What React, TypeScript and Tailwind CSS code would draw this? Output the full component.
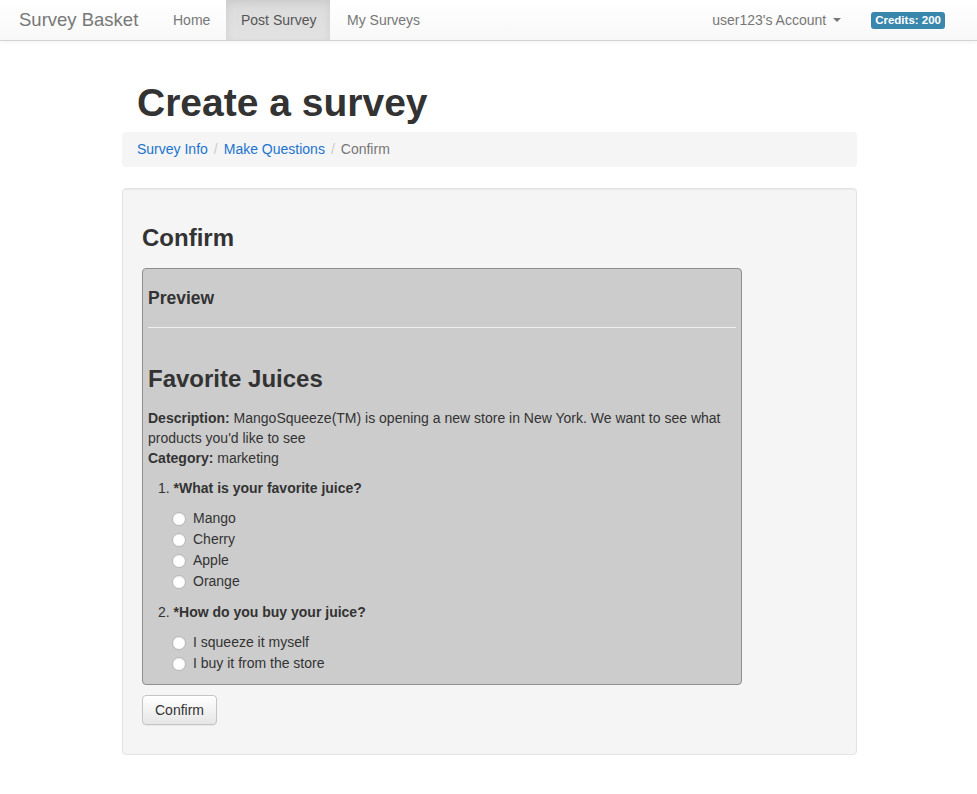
const font = { fontFamily: '"Liberation Sans", Arial, sans-serif' };

function Radio({ label }: { label: string }) {
  return (
    <div className="flex h-[21px] items-center">
      <span className="ml-[24px] h-[14px] w-[14px] rounded-full border border-[#b5b5b5] bg-white shadow-[inset_0_1px_1px_rgba(0,0,0,0.08)]" />
      <span className="ml-[7px] text-[14px] text-[#333]">{label}</span>
    </div>
  );
}

function Question({ n, text, options }: { n: number; text: string; options: string[] }) {
  return (
    <div className="mt-[10px]">
      <div className="pl-[10px] text-[14px] leading-[20px] text-[#333]">
        {n}. <b>{text}</b>
      </div>
      <div className="mt-[10px]">
        {options.map((o) => (
          <Radio key={o} label={o} />
        ))}
      </div>
    </div>
  );
}

export default function App() {
  return (
    <div className="min-h-screen bg-white text-[#333]" style={font}>
      <nav className="flex h-[41px] items-stretch whitespace-nowrap border-b border-[#d4d4d4] bg-gradient-to-b from-white to-[#f8f8f8] shadow-[0_1px_4px_rgba(0,0,0,0.06)]">
        <a className="ml-[4px] flex w-[154px] items-center px-[15px] text-[18.5px] text-[#777]">Survey Basket</a>
        <a className="flex w-[68px] items-center px-[15px] text-[14px] text-[#777]">Home</a>
        <a className="flex w-[104px] items-center bg-gradient-to-b from-[#dbdbdb] to-[#e2e2e2] pl-[15px] text-[14px] text-[#555] shadow-[inset_0_3px_9px_rgba(0,0,0,0.075)]">
          Post Survey
        </a>
        <a className="flex items-center px-[17px] text-[14px] text-[#777]">My Surveys</a>
        <div className="flex-1" />
        <a className="flex items-center px-[15px] text-[14px] text-[#777]">
          user123's Account
          <span className="ml-[7px] h-0 w-0 border-x-[4px] border-t-[4px] border-x-transparent border-t-[#777]" />
        </a>
        <div className="ml-[15px] mr-[32px] flex items-center">
          <span className="rounded-[3px] bg-[#3a87ad] px-[4px] py-[1px] text-[11.5px] font-bold leading-[15px] text-white">
            Credits: 200
          </span>
        </div>
      </nav>

      <div className="pl-[2px]">
        <div className="mx-auto w-[735px]">
          <h1 className="mt-[40px] pl-[15px] text-[39px] font-bold leading-[43px] text-[#333]">Create a survey</h1>

          <div className="mt-[8px] flex h-[35px] items-center rounded-[4px] bg-[#f5f5f5] px-[15px] text-[14px]">
            <a className="text-[#1a74cf]">Survey Info</a>
            <span className="px-[6px] text-[#ccc]">/</span>
            <a className="text-[#1a74cf]">Make Questions</a>
            <span className="px-[6px] text-[#ccc]">/</span>
            <span className="text-[#777]">Confirm</span>
          </div>

          <div className="mt-[21px] rounded-[4px] border border-[#e3e3e3] bg-[#f5f5f5] px-[19px] pb-[29px] pt-[19px] shadow-[inset_0_1px_1px_rgba(0,0,0,0.05)]">
            <h2 className="mt-[17px] text-[24px] font-bold leading-[26px]">Confirm</h2>

            <div className="mt-[17px] w-[600px] rounded-[4px] border border-[#8f8f8f] bg-[#cccccc] px-[5px] pb-[10px]">
              <h4 className="mt-[19px] text-[17.5px] font-bold leading-[20px]">Preview</h4>
              <hr className="mt-[19px] border-0 border-t border-[#eeeeee]" />
              <h3 className="mt-[38px] text-[24px] font-bold leading-[26px]">Favorite Juices</h3>
              <div className="mt-[16px] text-[14px] leading-[20px]">
                <b>Description:</b> MangoSqueeze(TM) is opening a new store in New York. We want to see what products you'd like to see
                <br />
                <b>Category:</b> marketing
              </div>
              <Question n={1} text="*What is your favorite juice?" options={['Mango', 'Cherry', 'Apple', 'Orange']} />
              <Question n={2} text="*How do you buy your juice?" options={['I squeeze it myself', 'I buy it from the store']} />
            </div>

            <button className="mt-[10px] h-[30px] rounded-[4px] border border-[#c4c4c4] bg-gradient-to-b from-white to-[#e6e6e6] px-[12px] text-[14px] text-[#333] shadow-[0_1px_1px_rgba(0,0,0,0.05)]">
              Confirm
            </button>
          </div>
        </div>
      </div>
    </div>
  );
}
